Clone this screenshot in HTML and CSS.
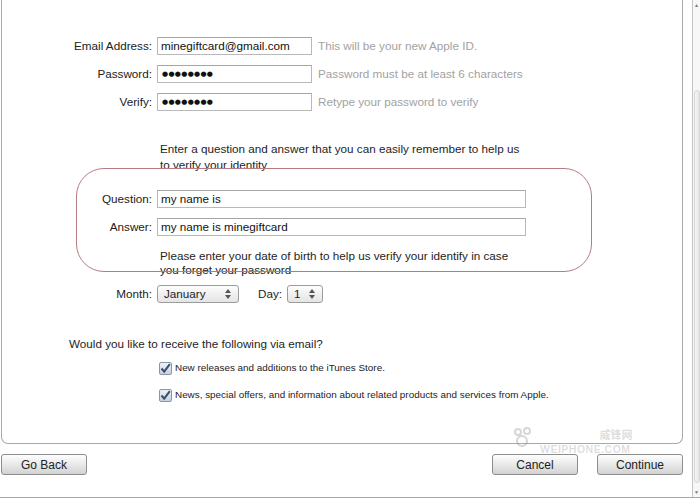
FILE: index.html
```html
<!DOCTYPE html>
<html>
<head>
<meta charset="utf-8">
<link rel="stylesheet" href="styles.css">
</head>
<body>
<div class="window">
  <div class="content">
    <div class="panel">
      <div class="account">
        <div class="label">Email Address:</div>
        <div class="field short">minegiftcard@gmail.com</div>
        <div class="hint">This will be your new Apple ID.</div>
        <div class="label">Password:</div>
        <div class="field short dots">&#9679;&#9679;&#9679;&#9679;&#9679;&#9679;&#9679;&#9679;</div>
        <div class="hint">Password must be at least 6 characters</div>
        <div class="label">Verify:</div>
        <div class="field short dots">&#9679;&#9679;&#9679;&#9679;&#9679;&#9679;&#9679;&#9679;</div>
        <div class="hint">Retype your password to verify</div>
      </div>

      <p class="note first">Enter a question and answer that you can easily remember to help us<br>to verify your identity</p>

      <div class="security">
        <div class="label">Question:</div>
        <div class="field long">my name is</div>
        <div class="label">Answer:</div>
        <div class="field long">my name is minegiftcard</div>
      </div>

      <p class="note second">Please enter your date of birth to help us verify your identify in case<br>you forget your password</p>

      <div class="birth">
        <div class="label">Month:</div>
        <div class="select month"><span>January</span><svg width="6" height="10" viewBox="0 0 6 10"><path d="M0 4 L3 0 L6 4 Z M0 6 L3 10 L6 6 Z" fill="#555"/></svg></div>
        <div class="label day">Day:</div>
        <div class="select dayval"><span>1</span><svg width="6" height="10" viewBox="0 0 6 10"><path d="M0 4 L3 0 L6 4 Z M0 6 L3 10 L6 6 Z" fill="#555"/></svg></div>
      </div>

      <p class="question">Would you like to receive the following via email?</p>

      <div class="checks">
        <div class="check"><span class="box"><svg width="11" height="11" viewBox="0 0 11 11"><path d="M1.5 5.5 L4.2 8.6 L9.8 1.2" fill="none" stroke="#3b4d6e" stroke-width="2"/></svg></span>New releases and additions to the iTunes Store.</div>
        <div class="check second"><span class="box"><svg width="11" height="11" viewBox="0 0 11 11"><path d="M1.5 5.5 L4.2 8.6 L9.8 1.2" fill="none" stroke="#3b4d6e" stroke-width="2"/></svg></span>News, special offers, and information about related products and services from Apple.</div>
      </div>

      <div class="annotation"></div>
      <div class="watermark">
        <svg class="wm-logo" width="26" height="22" viewBox="0 0 26 22"><g fill="none" stroke="rgba(120,120,120,0.3)" stroke-width="2"><circle cx="8" cy="6" r="3"/><circle cx="17" cy="5" r="3"/><circle cx="12" cy="15" r="5"/></g></svg>
        <div class="wm-text"><span class="cn">威锋网</span><span class="en">WEIPHONE.COM</span></div>
      </div>
    </div>

    <div class="buttons">
      <button class="btn back">Go Back</button>
      <div class="right">
        <button class="btn">Cancel</button>
        <button class="btn">Continue</button>
      </div>
    </div>
  </div>
  <div class="scrollbar">
    <div class="arrow up">&#9650;</div>
    <div class="thumb"></div>
    <div class="arrow down">&#9660;</div>
  </div>
</div>
</body>
</html>
```

FILE: styles.css
```css
* { box-sizing: border-box; }
html, body { margin: 0; padding: 0; background: #fff; }
body {
  width: 700px;
  height: 498px;
  overflow: hidden;
  font-family: "Liberation Sans", Arial, sans-serif;
  font-size: 11.7px;
  color: #1e1e1e;
}
.window {
  display: flex;
  height: 498px;
  border-bottom: 1px solid #a8a8a8;
}
.content {
  width: 692px;
  display: flex;
  flex-direction: column;
}
.panel {
  position: relative;
  margin-left: 1px;
  width: 682px;
  height: 444px;
  border: 1px solid #a9a9a9;
  border-top: none;
  border-radius: 0 0 7px 7px;
  padding-top: 37px;
}
.label {
  text-align: right;
  line-height: 18px;
  color: #222;
}
.field {
  height: 18px;
  border: 1px solid #b9b9b9;
  border-top-color: #a6a6a6;
  background: #fff;
  padding-left: 3px;
  line-height: 16px;
  color: #111;
  white-space: nowrap;
  overflow: hidden;
}
.field.short { width: 155px; }
.field.long { width: 369px; }
.field.dots {
  font-size: 7px;
  letter-spacing: 0.3px;
  padding-left: 4px;
  font-family: "DejaVu Sans", sans-serif;
  line-height: 16px;
}
.hint {
  color: #a2a2a2;
  line-height: 18px;
  padding-left: 1px;
}
.account {
  display: grid;
  grid-template-columns: 150px 155px auto;
  column-gap: 5px;
  row-gap: 10px;
  align-items: center;
}
.note {
  margin: 0;
  padding-left: 158px;
  color: #1e1e1e;
}
.note.first { margin-top: 30px; line-height: 16px; }
.note.second { margin-top: 13px; line-height: 14px; }
.security {
  display: grid;
  grid-template-columns: 150px 369px;
  column-gap: 5px;
  row-gap: 10px;
  margin-top: 17px;
}
.birth {
  display: flex;
  align-items: center;
  margin-top: 8px;
  height: 18px;
}
.birth .label { width: 150px; }
.birth .label.day { width: auto; margin-left: 19px; }
.select {
  height: 18px;
  border: 1px solid #9c9c9c;
  border-radius: 3px;
  background: linear-gradient(#fdfdfd, #e4e4e4);
  display: flex;
  align-items: center;
  justify-content: space-between;
  padding: 0 7px 0 6px;
  line-height: 16px;
}
.select.month { width: 82px; margin-left: 5px; }
.select.dayval { width: 36px; margin-left: 5px; }
.question {
  margin: 34px 0 0 67px;
  line-height: 14px;
}
.checks {
  margin-top: 10px;
  padding-left: 157px;
  display: flex;
  flex-direction: column;
  gap: 13px;
}
.check {
  display: flex;
  align-items: center;
  font-size: 9.9px;
  line-height: 14px;
  color: #222;
}
.box {
  width: 13px;
  height: 13px;
  border: 1px solid #8a96a6;
  border-radius: 2px;
  background: linear-gradient(#eef2f7, #c7d0dc);
  display: flex;
  align-items: center;
  justify-content: center;
  margin-right: 3px;
}
.annotation {
  position: absolute;
  left: 74px;
  top: 168px;
  width: 516px;
  height: 104px;
  border: 1px solid #b57c84;
  border-radius: 28px;
  pointer-events: none;
}
.watermark {
  position: absolute;
  left: 508px;
  top: 426px;
  display: flex;
  align-items: flex-start;
  gap: 4px;
  pointer-events: none;
}
.wm-text {
  display: flex;
  flex-direction: column;
  align-items: flex-end;
  gap: 1px;
  color: rgba(120,120,120,0.25);
  font-weight: bold;
}
.wm-text .cn { font-family: "Noto Sans CJK SC", sans-serif; font-size: 11px; line-height: 16px; margin-right: 22px; }
.wm-text .en { font-size: 10.5px; letter-spacing: 0.5px; line-height: 12px; margin-right: 24px; }
.buttons {
  display: flex;
  justify-content: space-between;
  align-items: center;
  margin-top: 10px;
  padding-left: 1px;
  width: 683px;
}
.right { display: flex; gap: 19px; }
.btn {
  width: 86px;
  height: 21px;
  border: 1px solid #8d8d8d;
  border-radius: 3px;
  background: linear-gradient(#fefefe, #e9e9e9 50%, #d2d2d2);
  font-family: "Liberation Sans", Arial, sans-serif;
  font-size: 12px;
  color: #222;
  padding: 0;
}
.scrollbar {
  width: 8px;
  border-left: 1px solid #c4c4c4;
  background: #f7f7f7;
  display: flex;
  flex-direction: column;
  align-items: center;
}
.arrow {
  font-size: 5px;
  color: #777;
  height: 10px;
  line-height: 10px;
}
.thumb {
  flex: 1;
  width: 6px;
  margin: 80px 0 4px;
  border: 1px solid #d6d6d6;
  border-radius: 3px;
  background: linear-gradient(90deg, #f6f6f6, #e6e6e6);
}
```
